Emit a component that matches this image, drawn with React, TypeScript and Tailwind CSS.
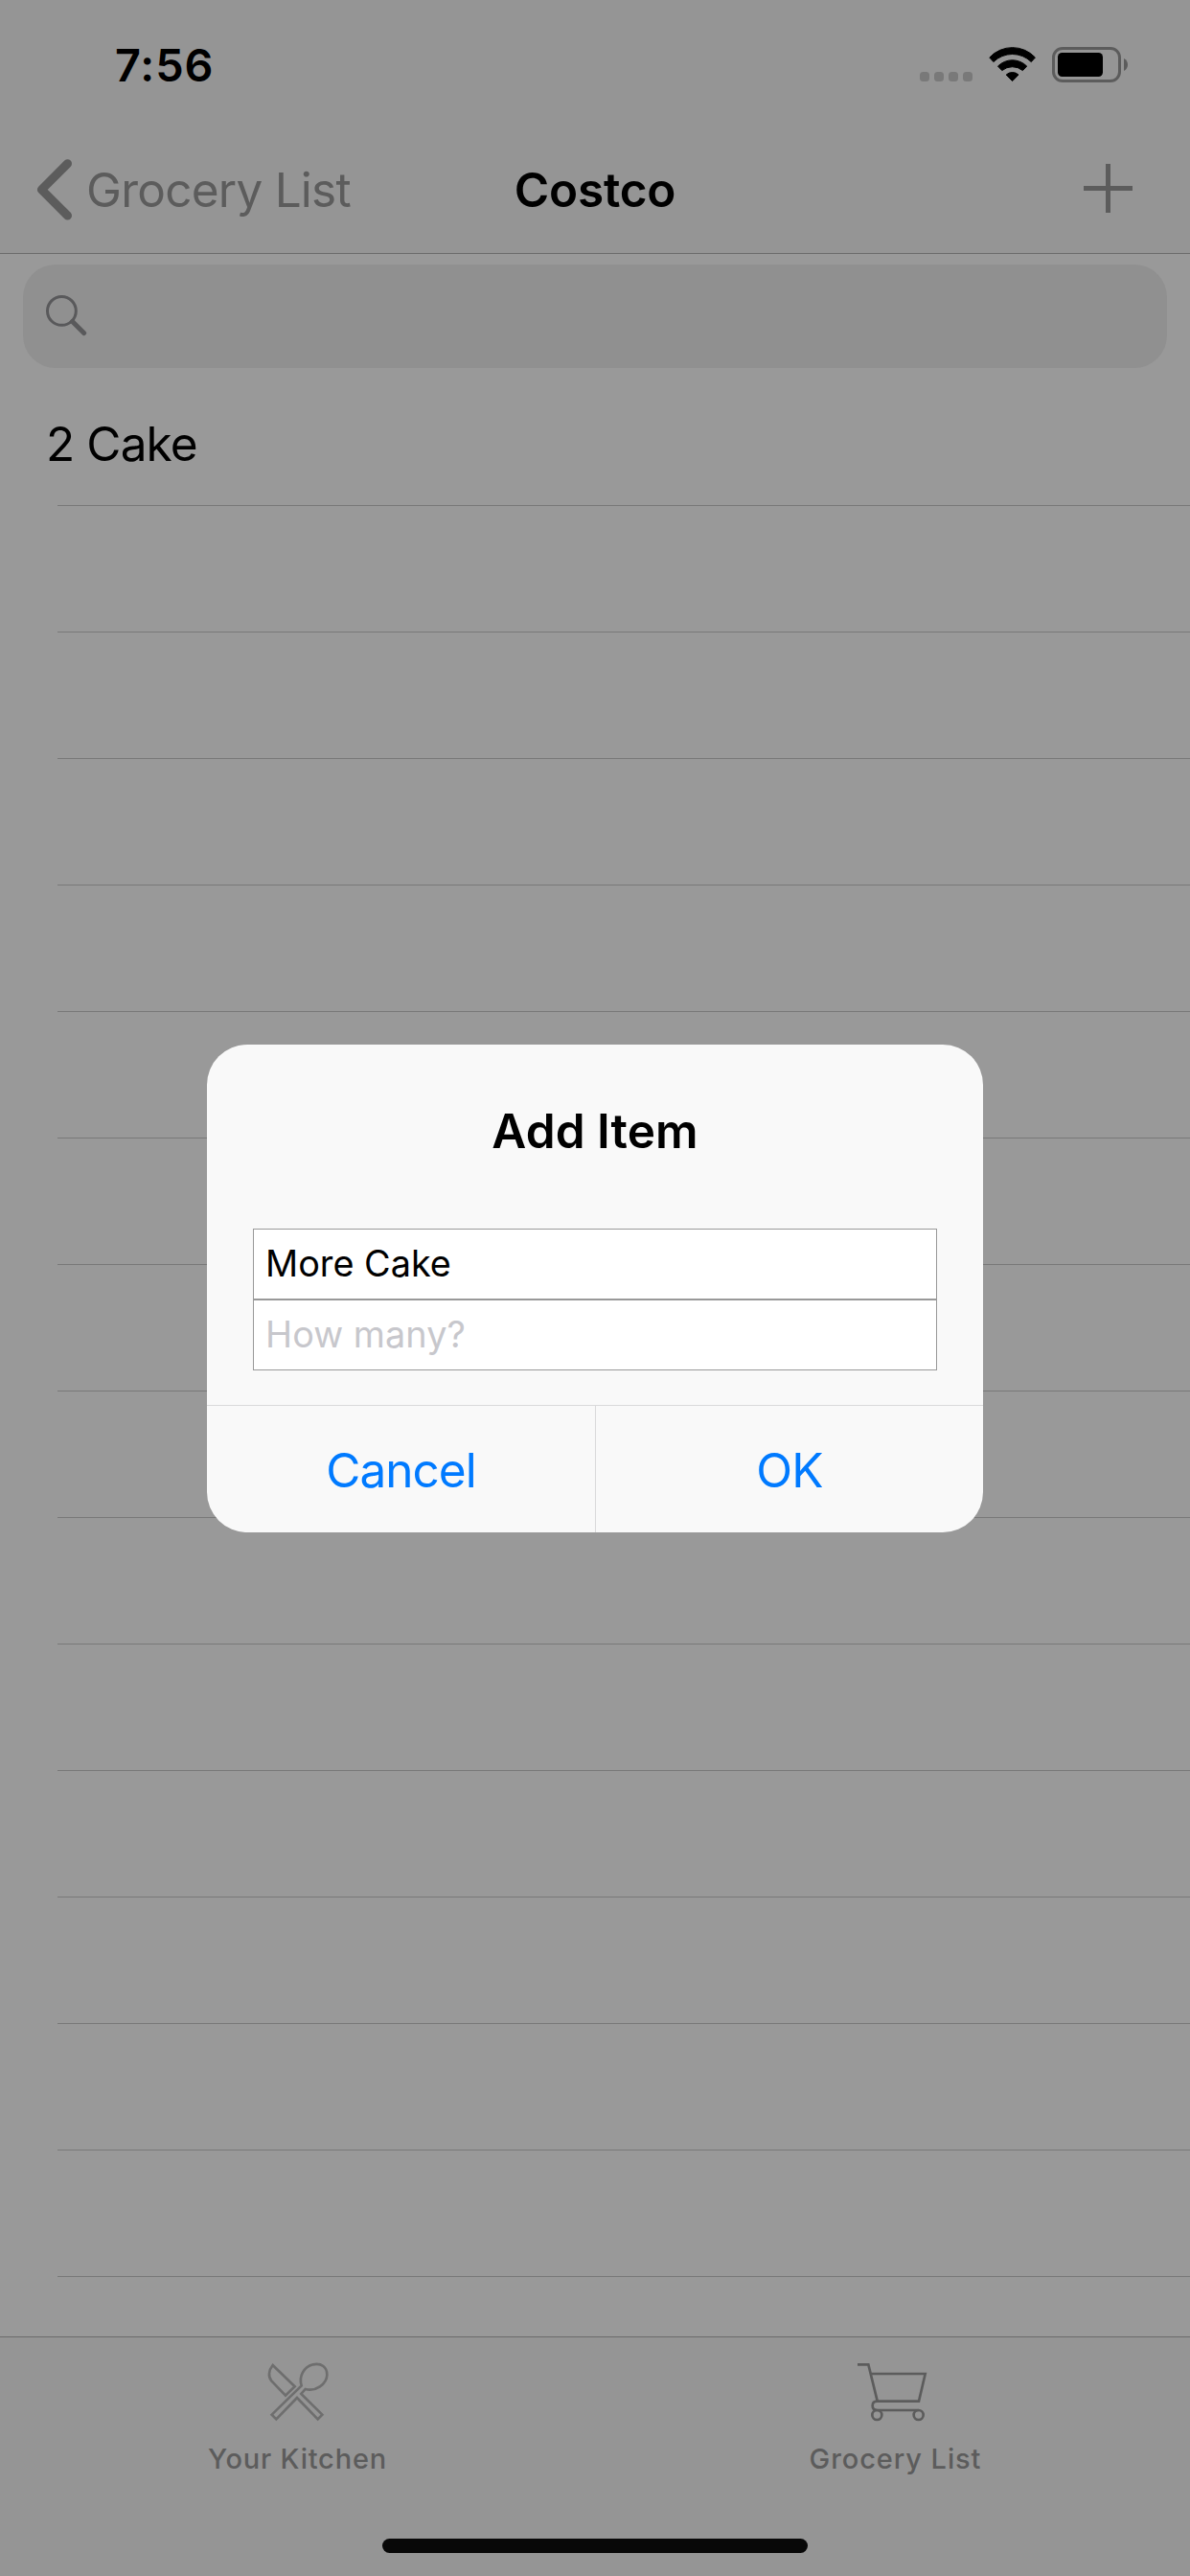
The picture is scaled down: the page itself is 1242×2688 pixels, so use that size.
import type { ReactNode } from "react";

const emptyRows = Array.from({ length: 14 }, (_, i) => i);

function WifiIcon() {
  return (
    <svg width="50" height="37" viewBox="0 0 50 37" fill="#000" stroke="#000" strokeWidth="1" strokeLinejoin="round">
      <path d="M.8 11A32.5 32.5 0 0 1 48.4 11L44.3 15.6A28 28 0 0 0 4.9 15.6Z" />
      <path d="M9.5 20.1A21.2 21.2 0 0 1 39.7 20.1L35.4 24.6A17 17 0 0 0 13.8 24.6Z" />
      <path d="M18.2 29A9.5 9.5 0 0 1 31 29L24.6 35.6Z" />
    </svg>
  );
}

function BatteryIcon() {
  return (
    <svg width="80" height="37" viewBox="0 0 80 37">
      <rect x="1.5" y="1.5" width="69" height="34" rx="9.5" fill="none" stroke="#5c5c5c" strokeWidth="3" />
      <rect x="6" y="6" width="47" height="25" rx="4.5" fill="#000" />
      <path d="M75 12C78 13.6 79 16 79 18.5S78 23.4 75 25Z" fill="#5c5c5c" />
    </svg>
  );
}

function StatusBar() {
  return (
    <div className="flex h-[132px] items-start justify-between pr-[64px] pl-[120px]">
      <span className="mt-[38px] text-[46.8px] leading-[60px] font-semibold tracking-[0.92px]">7:56</span>
      <div className="mt-[49px] flex h-[37px] items-start">
        <div className="mt-[26px] mr-[17px] flex gap-[5px]">
          <i className="size-[10px] rounded-[3.5px] bg-[#797979]" />
          <i className="size-[10px] rounded-[3.5px] bg-[#797979]" />
          <i className="size-[10px] rounded-[3.5px] bg-[#797979]" />
          <i className="size-[10px] rounded-[3.5px] bg-[#797979]" />
        </div>
        <WifiIcon />
        <div className="ml-[16px]">
          <BatteryIcon />
        </div>
      </div>
    </div>
  );
}

function NavBar() {
  return (
    <div className="grid h-[132px] grid-cols-[1fr_auto_1fr] items-center">
      <button className="flex items-center text-[#5c5c5c]">
        <svg className="ml-[36px]" width="54" height="66" viewBox="36 165.5 54 66" fill="none" stroke="currentColor" strokeWidth="9" strokeLinecap="round" strokeLinejoin="round">
          <path d="M70.5 171.3L43.4 198.4L70.5 225.5" />
        </svg>
        <span className="text-[49.5px] leading-[60px] tracking-[-0.76px]">Grocery List</span>
      </button>
      <h1 className="text-[49.5px] leading-[60px] font-semibold tracking-[-0.19px]">Costco</h1>
      <button className="mr-[60px] mb-[3px] justify-self-end">
        <svg width="51" height="51" viewBox="0 0 51 51" fill="#5c5c5c">
          <path d="M23 0H28V23H51V28H28V51H23V28H0V23H23Z" />
        </svg>
      </button>
    </div>
  );
}

function SearchField() {
  return (
    <div className="mx-[24px] mt-[11px] mb-[12px] flex h-[108px] items-start rounded-[34px] bg-[#909090] pt-[32px] pl-[24px]">
      <svg width="43" height="43" viewBox="0 0 43 43" fill="none" stroke="#59595b">
        <circle cx="16.4" cy="16.4" r="14.9" strokeWidth="3" />
        <path d="M27.6 27.6L39.6 39.6" strokeWidth="5" strokeLinecap="round" />
      </svg>
    </div>
  );
}

function KitchenIcon() {
  return (
    <svg width="68" height="65" viewBox="228 129 204 195" fill="none" stroke="#6e6e6e" strokeWidth="8">
      <path d="M251 144L320 211L291 239L247 193C236 180 238 160 251 144Z" />
      <path d="M341 208C332 178 348 150 377 142C404 136 421 151 421 174C420 204 385 228 353 219L340 234L406 299L392 313L327 246L262 313L248 299Z" />
    </svg>
  );
}

function CartIcon() {
  return (
    <svg width="75" height="65" viewBox="192 129 225 195" fill="none" stroke="#5c5c5c" strokeWidth="8">
      <path d="M195 142H229L257 256" />
      <path d="M236 171H407L387 257H256C247 257 242 263 242 271S247 285 256 285H386" />
      <circle cx="256" cy="300" r="15" />
      <circle cx="386" cy="300" r="15" />
    </svg>
  );
}

function Tab({ icon, children }: { icon: ReactNode; children: ReactNode }) {
  return (
    <button className="flex flex-1 flex-col items-center pt-[24px] text-[29px] leading-[35px] font-medium text-[#5c5c5c]">
      {icon}
      <span className="mt-[20px]">{children}</span>
    </button>
  );
}

function AddItemDialog() {
  return (
    <div role="dialog" className="absolute top-[1090px] left-[216px] flex h-[509px] w-[810px] flex-col overflow-hidden rounded-[42px] bg-[#f9f9f9]">
      <h2 className="mt-[60px] text-center text-[49.5px] leading-[60px] font-semibold tracking-[0.06px]">Add Item</h2>
      <div className="mx-[48px] mt-[72px] text-[37.8px] leading-[46px]">
        <div className="flex h-[74px] items-center border border-[#999] bg-white pb-[2px] pl-[12px] text-black">More Cake</div>
        <div className="flex h-[74px] items-center border border-[#999] bg-white pb-[2px] pl-[12px] tracking-[0.06px] text-[#c7c7cc]">How many?</div>
      </div>
      <div className="mt-[36px] flex flex-1 border-t border-[#dadadb] text-[49.5px] leading-[60px] text-[#007aff]">
        <button className="w-[406px] border-r border-[#dadadb] pt-[2px] tracking-[-1px]">Cancel</button>
        <button className="flex-1 pt-[2px] tracking-[-0.85px]">OK</button>
      </div>
    </div>
  );
}

export default function App() {
  return (
    <div className="relative flex h-[2688px] w-[1242px] flex-col overflow-hidden bg-[#999] font-[Inter,sans-serif] text-black">
      <header className="h-[265px] shrink-0 border-b border-[#6b6b6b] bg-[#959595]">
        <StatusBar />
        <NavBar />
      </header>
      <main className="flex-1 overflow-hidden">
        <SearchField />
        <ul className="ml-[60px]">
          <li className="flex h-[132px] items-center border-b border-[#787878] pt-[3px]">
            <span className="-ml-[12px] text-[49.5px] leading-[60px] tracking-[-0.88px]">2 Cake</span>
          </li>
          {emptyRows.map((row) => (
            <li key={row} className="h-[132px] border-b border-[#787878]" />
          ))}
        </ul>
      </main>
      <footer className="flex h-[250px] shrink-0 flex-col border-t border-[#6b6b6b] bg-[#959595]">
        <nav className="flex">
          <Tab icon={<KitchenIcon />}>
            <span className="tracking-[0.79px]">Your Kitchen</span>
          </Tab>
          <Tab icon={<CartIcon />}>
            <span className="ml-[6px] tracking-[0.91px]">Grocery List</span>
          </Tab>
        </nav>
        <div className="mx-auto mt-auto mb-[24px] h-[15px] w-[444px] rounded-full bg-[#080808]" />
      </footer>
      <AddItemDialog />
    </div>
  );
}
